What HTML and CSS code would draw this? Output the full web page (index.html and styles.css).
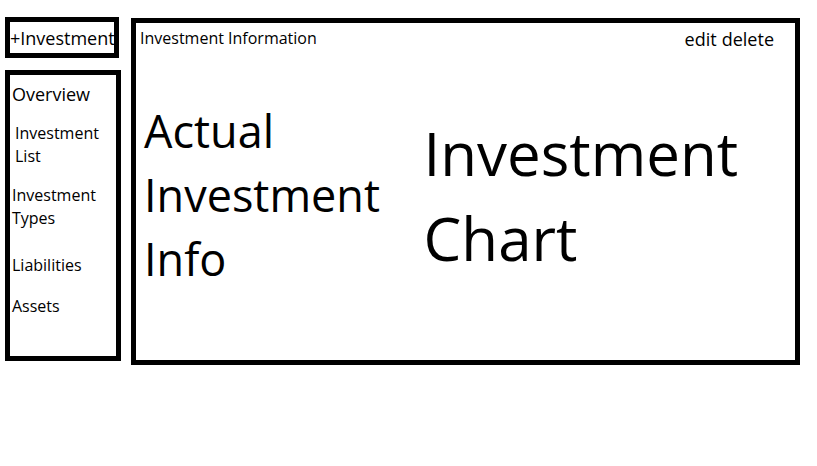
FILE: index.html
```html
<!DOCTYPE html>
<html lang="en">
<head>
<meta charset="utf-8">
<title>Investments</title>
<link rel="stylesheet" href="styles.css">
</head>
<body>
<div class="layout">
  <aside class="sidebar">
    <button class="add" type="button">+Investment</button>
    <nav class="menu">
      <a class="link large" href="#">Overview</a>
      <a class="link indent" href="#">Investment List</a>
      <a class="link" href="#">Investment Types</a>
      <a class="link spaced" href="#">Liabilities</a>
      <a class="link" href="#">Assets</a>
    </nav>
  </aside>
  <main class="panel">
    <header class="bar">
      <h1 class="title">Investment Information</h1>
      <div class="actions">
        <button class="action" type="button">edit</button>
        <button class="action" type="button">delete</button>
      </div>
    </header>
    <div class="content">
      <section class="info">Actual Investment Info</section>
      <section class="chart">Investment Chart</section>
    </div>
  </main>
</div>
</body>
</html>
```

FILE: styles.css
```css
* {
  box-sizing: border-box;
}

body {
  margin: 0;
  background: #fff;
  color: #000;
  font-family: "Segoe UI", "Open Sans", "Noto Sans", sans-serif;
}

button {
  padding: 0;
  border: 0;
  background: none;
  color: inherit;
  font-family: inherit;
}

.layout {
  display: grid;
  grid-template-columns: 116px 1fr;
  gap: 10px;
  align-items: start;
  padding: 17px 17px 0 5px;
}

.sidebar {
  display: flex;
  flex-direction: column;
  gap: 12px;
}

.add {
  height: 41px;
  margin-right: 2px;
  border: 5px solid #000;
  font-size: 18px;
  line-height: 24px;
  white-space: nowrap;
}

.menu {
  display: flex;
  flex-direction: column;
  gap: 16px;
  min-height: 291px;
  padding: 8px 2px;
  border: 5px solid #000;
}

.link {
  color: inherit;
  font-size: 16px;
  line-height: 23px;
  text-decoration: none;
}

.large {
  font-size: 18px;
}

.indent {
  padding-left: 3px;
}

.spaced {
  padding: 8px 0 2px;
}

.panel {
  min-height: 347px;
  margin-top: 1px;
  border: 5px solid #000;
}

.bar {
  display: flex;
  justify-content: space-between;
  padding: 4px 21px 0 4px;
}

.title {
  margin: 0;
  font-size: 16px;
  font-weight: 400;
  line-height: 23px;
}

.actions {
  display: flex;
  gap: 5px;
}

.action {
  font-size: 18px;
  line-height: 24px;
}

.content {
  display: grid;
  grid-template-columns: 3fr 4fr;
  padding: 48px 8px 0;
}

.info {
  font-size: 45px;
  line-height: 64px;
}

.chart {
  padding: 12px 0 0 4px;
  font-size: 60px;
  line-height: 85px;
}
```
